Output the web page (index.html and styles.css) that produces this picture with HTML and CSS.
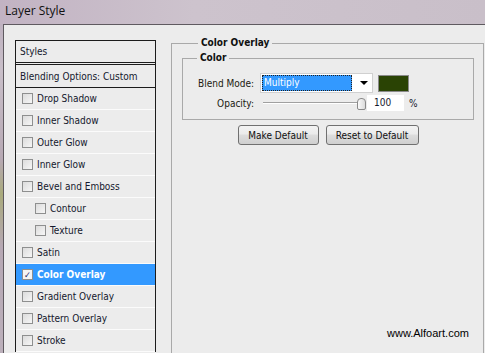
FILE: index.html
```html
<!DOCTYPE html>
<html lang="en">
<head>
    <meta charset="UTF-8">
    <title>Layer Style</title>
    <link rel="stylesheet" href="styles.css">
</head>
<body>

    <div class="titlebar">Layer Style</div>

    <div class="dialog">

        <!-- Liste des styles -->
        <div class="styles-panel">
            <div class="row head">Styles</div>
            <div class="row blending">Blending Options: Custom</div>
            <div class="row"><span class="check"></span>Drop Shadow</div>
            <div class="row"><span class="check"></span>Inner Shadow</div>
            <div class="row"><span class="check"></span>Outer Glow</div>
            <div class="row"><span class="check"></span>Inner Glow</div>
            <div class="row"><span class="check"></span>Bevel and Emboss</div>
            <div class="row sub"><span class="check"></span>Contour</div>
            <div class="row sub"><span class="check"></span>Texture</div>
            <div class="row"><span class="check"></span>Satin</div>
            <div class="row selected"><span class="check checked">&#10003;</span>Color Overlay</div>
            <div class="row"><span class="check"></span>Gradient Overlay</div>
            <div class="row"><span class="check"></span>Pattern Overlay</div>
            <div class="row"><span class="check"></span>Stroke</div>
        </div>

        <!-- Options -->
        <fieldset class="group outer">
            <legend>Color Overlay</legend>
            <fieldset class="group inner">
                <legend>Color</legend>
                <div class="field">
                    <label>Blend Mode:</label>
                    <div class="select">
                        <span class="select-value">Multiply</span>
                        <span class="arrow"></span>
                    </div>
                    <span class="swatch"></span>
                </div>
                <div class="field">
                    <label>Opacity:</label>
                    <div class="slider"><span class="thumb"></span></div>
                    <span class="number">100</span>
                    <span class="unit">%</span>
                </div>
            </fieldset>
            <div class="buttons">
                <button class="btn make">Make Default</button>
                <button class="btn reset">Reset to Default</button>
            </div>
        </fieldset>

        <div class="watermark">www.Alfoart.com</div>
    </div>

</body>
</html>
```

FILE: styles.css
```css
body {
    margin: 0;
    width: 485px;
    height: 353px;
    overflow: hidden;
    background: linear-gradient(to bottom, #b9abbb 0%, #c9bfc9 20%, #b7a9b4 45%, #a9aa7c 55%, #b6a8b4 70%, #bcb0bb 100%);
    font-family: "DejaVu Sans Condensed", "DejaVu Sans", Verdana, sans-serif;
    font-size: 10px;
    color: #14182c;
}

.titlebar {
    height: 24px;
    line-height: 22px;
    padding-left: 5px;
    font-family: "Open Sans", "Noto Sans", sans-serif;
    font-size: 12px;
    color: #101010;
    background: linear-gradient(to right, #c2b3c3, #cdc3cd 40%, #c9bfc9);
}

.dialog {
    position: relative;
    margin-left: 3px;
    height: 329px;
    border-top: 1px solid #5f5a60;
    border-left: 1px solid #5f5a60;
    background: #ececec;
    display: flex;
    align-items: flex-start;
    padding: 12px 0 0 11px;
    box-sizing: border-box;
}

/* Liste de gauche */
.styles-panel {
    width: 141px;
    margin-top: 3px;
    border: 1px solid #1c1c1c;
    border-bottom: none;
    box-sizing: border-box;
}

.row {
    display: flex;
    align-items: center;
    height: 21px;
    padding-left: 6px;
    border-bottom: 1px solid #fbfbfb;
}

.row.head {
    height: 21px;
    padding-left: 4px;
    border-bottom: 3px double #1c1c1c;
}

.row.blending {
    height: 22px;
    padding-left: 4px;
    border-bottom: 1px solid #1c1c1c;
}

.row.sub {
    padding-left: 19px;
}

.row.selected {
    background: #3399ff;
    color: #fff;
    font-weight: bold;
}

.check {
    width: 11px;
    height: 11px;
    margin-right: 4px;
    border: 1px solid #8e8f8f;
    background: linear-gradient(135deg, #dcdcdc, #f6f6f6);
    box-sizing: border-box;
    display: flex;
    align-items: center;
    justify-content: center;
    font-size: 9px;
    font-weight: bold;
    color: #1f2a6b;
}

.check.checked {
    background: #f4f4f4;
}

/* Groupes */
.group {
    margin: 0;
    border: 1px solid #a9a9a9;
    padding: 0;
    box-sizing: border-box;
}

.group legend {
    font-weight: bold;
    line-height: 12px;
    padding: 0 3px;
    margin-left: 15px;
    color: #101010;
}

.outer {
    width: 313px;
    height: 330px;
    margin-left: 15px;
    padding: 3px 0 0 10px;
}

.outer legend {
    margin-left: 16px;
}

.inner {
    width: 292px;
    padding: 9px 0 8px 0;
}

.inner legend {
    margin-left: 14px;
}

.field {
    display: flex;
    align-items: center;
}

.field + .field {
    margin-top: 2px;
}

.field label {
    width: 71px;
    text-align: right;
    margin-right: 6px;
    color: #201a10;
}

.select {
    width: 113px;
    height: 20px;
    border: 1px solid #d0d0d0;
    background: #fff;
    box-sizing: border-box;
    display: flex;
    align-items: center;
    padding: 0 4px 0 1px;
}

.select-value {
    flex: 1;
    height: 16px;
    line-height: 16px;
    background: #3399ff;
    color: #fff;
    outline: 1px dotted #222;
    outline-offset: -1px;
    padding-left: 2px;
}

.arrow {
    width: 0;
    height: 0;
    margin-left: 8px;
    border-left: 4px solid transparent;
    border-right: 4px solid transparent;
    border-top: 4px solid #000;
}

.swatch {
    width: 31px;
    height: 17px;
    margin-left: 5px;
    background: #2a4304;
    border: 1px solid #8a8a8a;
    box-sizing: border-box;
}

.slider {
    position: relative;
    width: 104px;
    height: 16px;
    margin-left: 3px;
}

.slider::before {
    content: '';
    position: absolute;
    left: 0;
    right: 8px;
    top: 7px;
    height: 2px;
    border-top: 1px solid #a0a0a0;
    border-bottom: 1px solid #fff;
    box-sizing: border-box;
}

.thumb {
    position: absolute;
    left: 94px;
    top: 3px;
    width: 9px;
    height: 12px;
    border: 1px solid #8a8a8a;
    border-radius: 4px 4px 2px 2px;
    background: linear-gradient(to right, #fafafa, #dcdcdc);
    box-sizing: border-box;
}

.number {
    width: 37px;
    height: 16px;
    line-height: 16px;
    background: #fff;
    padding-left: 7px;
    box-sizing: border-box;
    margin-left: 0;
}

.unit {
    margin-left: 5px;
}

.buttons {
    display: flex;
    justify-content: center;
    gap: 7px;
    width: 292px;
    margin-top: 5px;
}

.btn {
    height: 20px;
    padding: 0;
    border: 1px solid #707070;
    border-radius: 3px;
    background: linear-gradient(to bottom, #f3f3f3 0%, #ebebeb 45%, #dddddd 50%, #cfcfcf 100%);
    font-family: "DejaVu Sans Condensed", "DejaVu Sans", Verdana, sans-serif;
    font-size: 10px;
    color: #101010;
}

.btn.make {
    width: 81px;
}

.btn.reset {
    width: 93px;
}

/* Filigrane */
.watermark {
    position: absolute;
    left: 383px;
    top: 302px;
    font-family: "Liberation Sans", Arial, sans-serif;
    font-size: 11px;
    color: #000;
}
```
